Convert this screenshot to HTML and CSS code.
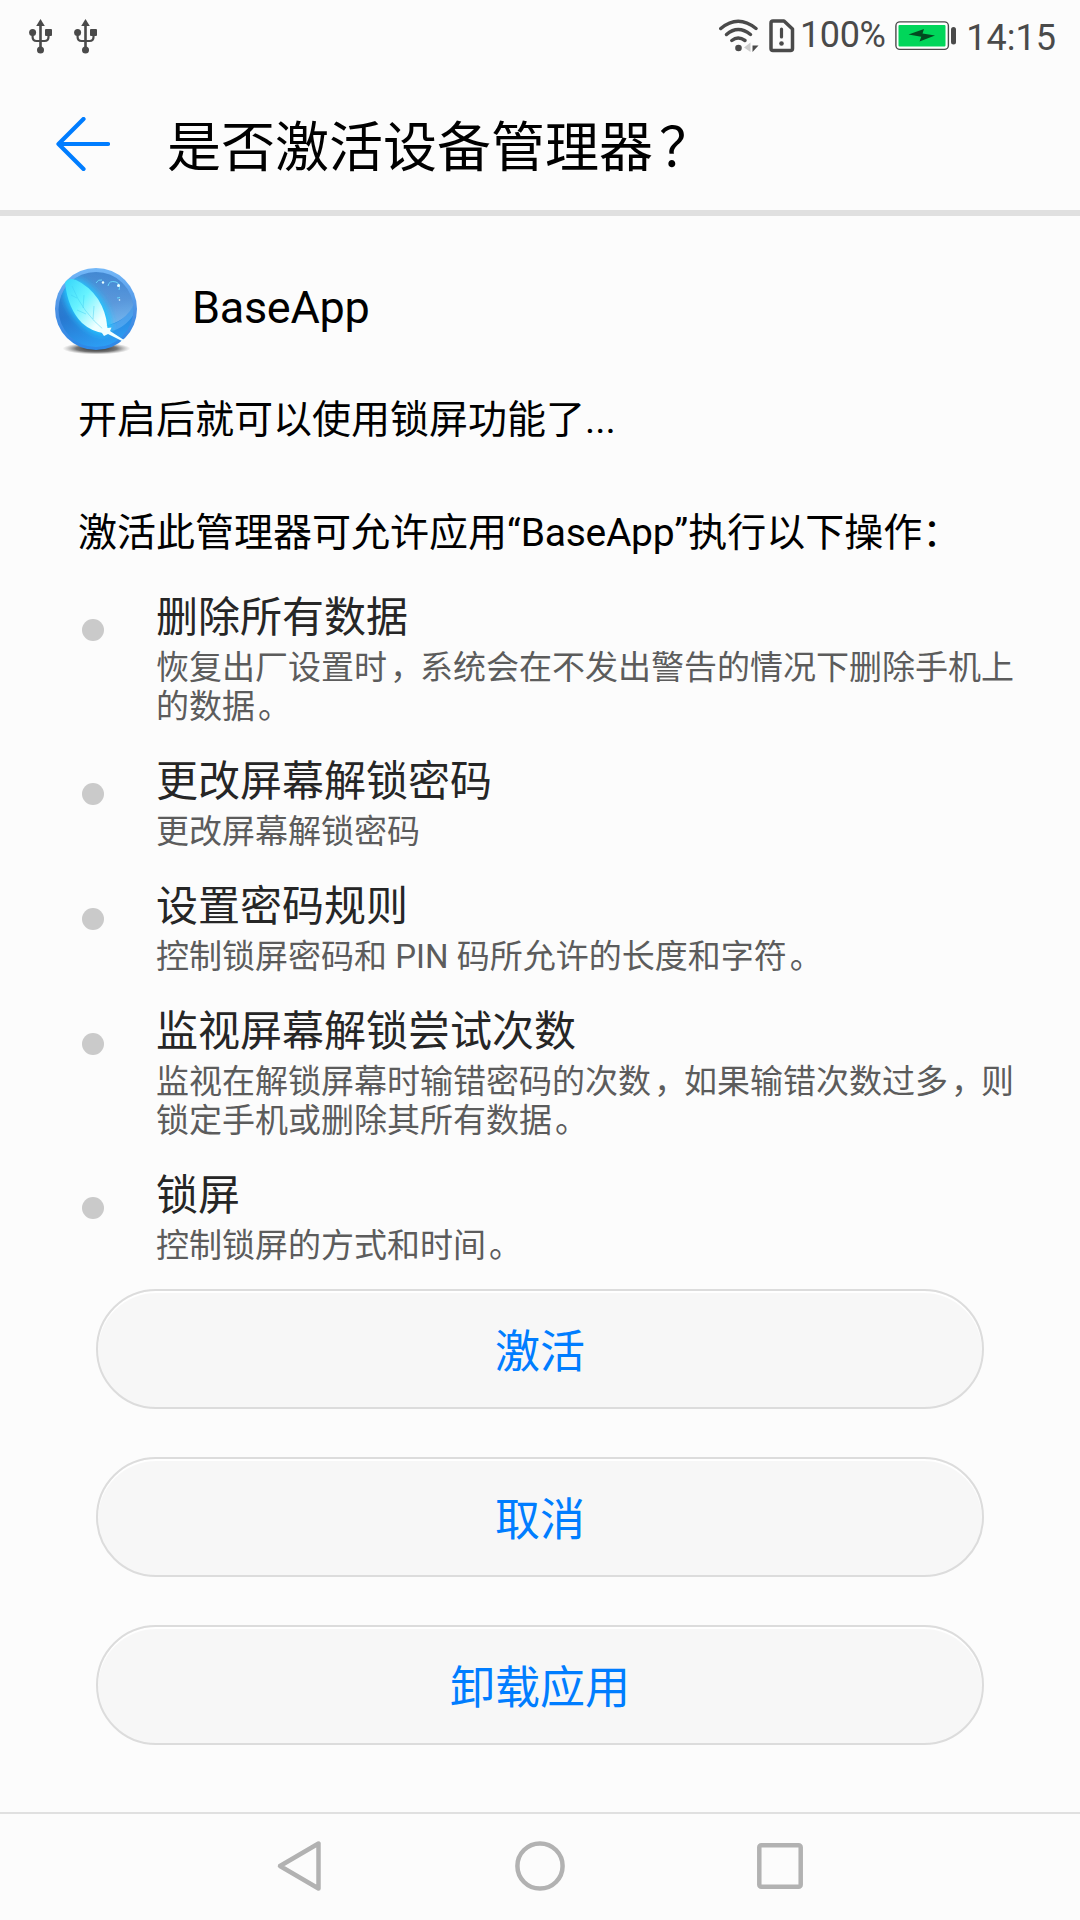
FILE: index.html
```html
<!DOCTYPE html>
<html lang="zh-CN">
<head>
<meta charset="utf-8">
<title>是否激活设备管理器？</title>
<link rel="stylesheet" href="styles.css">
</head>
<body>
<div class="screen">
  <div class="status">
    <svg class="usb" viewBox="0 0 24 36"><use href="#usb"/></svg>
    <svg class="usb" viewBox="0 0 24 36">
      <defs><g id="usb" fill="#4a4a4a">
        <path d="M12.500 1l4.300 7H8.200z"/><rect x="11.200" y="6" width="2.600" height="25"/>
        <circle cx="4.600" cy="14.500" r="3.500"/><rect x="17" y="11" width="7" height="7" rx="1"/>
        <circle cx="12.500" cy="32" r="3.500"/>
        <path d="M4.600 15.500V19q0 4 4 4h7.900q4 0 4-4v-3.500" fill="none" stroke="#4a4a4a" stroke-width="2.200"/>
      </g></defs>
      <use href="#usb"/>
    </svg>
    <svg class="wifi" viewBox="0 0 40 34">
      <g fill="none" stroke="#4a4a4a" stroke-width="3.500" stroke-linecap="round">
        <path d="M1.800 9.500Q19 -5 37 9.500"/><path d="M7.500 15.500Q19 5.500 31.500 15.500"/><path d="M12.800 21.500Q19 16.500 26 21.500"/>
      </g>
      <circle cx="19.500" cy="29" r="3.300" fill="#4a4a4a"/>
      <path d="M31.500 23.500V33L25 28.500z" fill="#ccc"/><path d="M33.500 26.500H39.500l-6 6.500z" fill="#4a4a4a"/>
    </svg>
    <svg class="sim" viewBox="0 0 26 34">
      <path d="M4 2h11l8.500 8v19.500q0 2-2 2H4q-2 0-2-2V4q0-2 2-2z" fill="none" stroke="#4a4a4a" stroke-width="3.500" stroke-linejoin="round"/>
      <path d="M12.500 10v8" stroke="#4a4a4a" stroke-width="3.200" stroke-linecap="round"/><circle cx="12.500" cy="24.500" r="2.300" fill="#4a4a4a"/>
    </svg>
    <span class="percent">100%</span>
    <svg class="battery" viewBox="0 0 62 30">
      <rect x=".9" y=".9" width="52.500" height="27.500" rx="4" fill="#fff" stroke="#4a4a4a" stroke-width="1.400"/>
      <rect x="3.500" y="4" width="47" height="21.500" rx="1" fill="#00d65a"/>
      <path d="M13.500 13.500L29 8l-1.500 4.500L40 14.500 24.500 20.500l1.800-4.700z" fill="#024a20"/>
      <rect x="56" y="6" width="5" height="17.500" rx="2.500" fill="#4a4a4a"/>
    </svg>
    <span class="clock">14:15</span>
  </div>
  <header class="header">
    <svg class="back" viewBox="0 0 54 54"><path d="M52 27H3M27.500 2L2.500 27l25 25" fill="none" stroke="#007dff" stroke-width="4.200" stroke-linecap="round" stroke-linejoin="round"/></svg>
    <h1 class="title">是否激活设备管理器<span class="question">？</span></h1>
  </header>
  <main class="content">
    <div class="app">
      <svg class="logo" viewBox="0 0 96 96">
        <defs>
          <linearGradient id="rim" x1="0" y1="0" x2="0" y2="1"><stop offset="0" stop-color="#74b8f8"/><stop offset=".55" stop-color="#4a90e4"/><stop offset="1" stop-color="#2b88e8"/></linearGradient>
          <linearGradient id="ball" x1=".3" y1="0" x2=".6" y2="1"><stop offset="0" stop-color="#347fce"/><stop offset=".5" stop-color="#2878d0"/><stop offset="1" stop-color="#2c9ff5"/></linearGradient>
          <linearGradient id="gloss" x1="0" y1="0" x2="0" y2="1"><stop offset="0" stop-color="#fff" stop-opacity=".08"/><stop offset="1" stop-color="#fff" stop-opacity=".36"/></linearGradient>
          <linearGradient id="plume" x1="0" y1="0" x2="1" y2="1"><stop offset="0" stop-color="#35d5fa"/><stop offset=".4" stop-color="#68f3ff"/><stop offset=".8" stop-color="#efffff"/></linearGradient>
          <radialGradient id="shade"><stop offset="0" stop-color="#222"/><stop offset=".6" stop-color="#555" stop-opacity=".8"/><stop offset="1" stop-color="#888" stop-opacity="0"/></radialGradient>
          <filter id="glow" x="-50%" y="-50%" width="200%" height="200%"><feGaussianBlur stdDeviation="3.500"/></filter>
          <clipPath id="inner"><circle cx="46" cy="47.500" r="37.500"/></clipPath>
        </defs>
        <ellipse cx="46.500" cy="86.500" rx="34" ry="6" fill="url(#shade)"/>
        <circle cx="46" cy="47" r="41" fill="url(#rim)"/>
        <circle cx="46" cy="47.500" r="37.500" fill="url(#ball)"/>
        <g clip-path="url(#inner)">
          <path d="M14 10H84V42Q76 60 54 64L24 16z" fill="url(#gloss)"/>
          <path d="M54 64Q74 62 84 42v10Q74 68 56 70z" fill="#8ccaff" opacity=".35"/>
          <path d="M12 22Q26 10 42 26Q60 42 62 66Q56 80 38 68Q14 52 12 22z" fill="#22c4ff" filter="url(#glow)"/>
        </g>
        <path d="M15 21Q18 15 26 18Q39 24 48 37Q56 50 57 63L53 71Q41 69 32 61Q18 47 15 21z" fill="url(#plume)"/>
        <path d="M22 24Q32 50 55 69M27 36l-6-3M36 52l-9-4M33 46l1-13M43 57l1-13" stroke="#3bcdf2" stroke-width=".8" fill="none" opacity=".55"/>
        <path d="M50 68l7-5 .5 3 4-.5-1.500 3.500L74 78l-1 1.500L58 72l-4 2z" fill="#f0ffff"/>
        <g fill="none" stroke="#69d5fb" stroke-width="1"><path d="M46 21q2-4 6-3M58 24q1-6 8-4 5 2 3 8M67 36l3-.5"/></g>
        <g fill="#e9ffff"><circle cx="53" cy="20.500" r="1.200"/><circle cx="68.500" cy="23.500" r="1.500"/><circle cx="69.500" cy="38" r=".8"/></g>
      </svg>
      <span class="name">BaseApp</span>
    </div>
    <p class="lead">开启后就可以使用锁屏功能了...</p>
    <p class="lead allow">激活此管理器可允许应用“<span class="latin">BaseApp</span>”执行以下操作：</p>
    <ul class="policies">
      <li class="policy"><h2>删除所有数据</h2><p>恢复出厂设置时<span class="mark">，</span>系统会在不发出警告的情况下删除手机上的数据<span class="mark">。</span></p></li>
      <li class="policy"><h2>更改屏幕解锁密码</h2><p>更改屏幕解锁密码</p></li>
      <li class="policy"><h2>设置密码规则</h2><p>控制锁屏密码和 PIN 码所允许的长度和字符<span class="mark">。</span></p></li>
      <li class="policy"><h2>监视屏幕解锁尝试次数</h2><p>监视在解锁屏幕时输错密码的次数<span class="mark">，</span>如果输错次数过多<span class="mark">，</span>则锁定手机或删除其所有数据<span class="mark">。</span></p></li>
      <li class="policy"><h2>锁屏</h2><p>控制锁屏的方式和时间<span class="mark">。</span></p></li>
    </ul>
    <div class="actions">
      <button class="action">激活</button>
      <button class="action">取消</button>
      <button class="action">卸载应用</button>
    </div>
  </main>
  <nav class="nav">
    <svg viewBox="0 0 54 54"><path d="M45.500 4.500v45L7 27z" fill="none" stroke="#b2b2b2" stroke-width="4.500" stroke-linejoin="round"/></svg>
    <svg viewBox="0 0 54 54"><circle cx="27" cy="27" r="22.600" fill="none" stroke="#b2b2b2" stroke-width="4.500"/></svg>
    <svg viewBox="0 0 54 54"><rect x="6.300" y="6.300" width="41.400" height="41.400" rx="2" fill="none" stroke="#b2b2b2" stroke-width="4.500"/></svg>
  </nav>
</div>
</body>
</html>
```
FILE: styles.css
```css
* { box-sizing: border-box; margin: 0; padding: 0; }
body {
  background: #fcfcfc;
  color: #000;
  font-family: Roboto, "Noto Sans CJK SC", sans-serif;
  font-weight: 400;
}
svg { display: block; flex: none; }
.screen { width: 1080px; height: 1920px; display: flex; flex-direction: column; overflow: hidden; }

.status { height: 72px; padding: 0 24px 0 28px; display: flex; align-items: flex-start; color: #4a4a4a; font-size: 36px; line-height: 42px; }
.usb { width: 24px; height: 36px; margin: 18px 21px 0 0; }
.wifi { width: 40px; height: 34px; margin: 19px 0 0 601px; }
.sim { width: 26px; height: 34px; margin: 19px 0 0 10px; }
.percent { margin: 14px 0 0 5px; width: 95px; white-space: nowrap; letter-spacing: -0.4px; }
.battery { width: 62px; height: 30px; margin: 21px 0 0 1px; }
.clock { margin: 17px 0 0 9px; white-space: nowrap; }

.header { height: 144px; padding: 0 54px 0 56px; border-bottom: 6px solid #e0e0e0; display: flex; align-items: center; }
.back { width: 54px; height: 54px; margin-top: 6px; }
.title { margin: 15px 0 0 57px; font-size: 54px; line-height: 80px; font-weight: 400; }
.question { display: inline-block; width: 1em; text-indent: 6px; }

.content { flex: 1; }
.app { height: 174px; padding: 46px 0 0 50px; display: flex; align-items: flex-start; }
.logo { width: 96px; height: 96px; }
.name { margin: 19px 0 0 46px; font-size: 45px; line-height: 54px; letter-spacing: -0.3px; }
.lead { padding: 0 78px; font-size: 39px; line-height: 60px; }
.allow { margin-top: 53px; }
.latin { letter-spacing: -0.3px; }
.mark { display: inline-block; width: 1em; text-indent: 3px; }

.policies { list-style: none; padding: 24px 54px 0 82px; }
.policy { position: relative; padding: 6px 0 25px 74px; }
.policy::before { content: ""; position: absolute; left: 0; top: 32px; width: 22px; height: 22px; border-radius: 50%; background: #cacaca; }
.policy h2 { font-size: 42px; line-height: 50px; font-weight: 400; color: #262626; }
.policy p { margin-top: 5px; font-size: 33px; line-height: 39px; color: #5c5c5c; }

.actions { display: flex; flex-direction: column; gap: 48px; padding: 0 96px; margin-top: -1px; }
.action {
  height: 120px;
  padding-bottom: 2px;
  border: 2px solid #dcdcdc;
  border-radius: 60px;
  background: #f7f7f7;
  box-shadow: inset 0 2px 1px #fff;
  color: #007dff;
  font: inherit;
  font-size: 45px;
}

.nav { height: 108px; border-top: 2px solid #e0e0e0; padding: 0 273px 2px; display: flex; justify-content: space-between; align-items: center; }
.nav svg { width: 54px; height: 54px; }
```
